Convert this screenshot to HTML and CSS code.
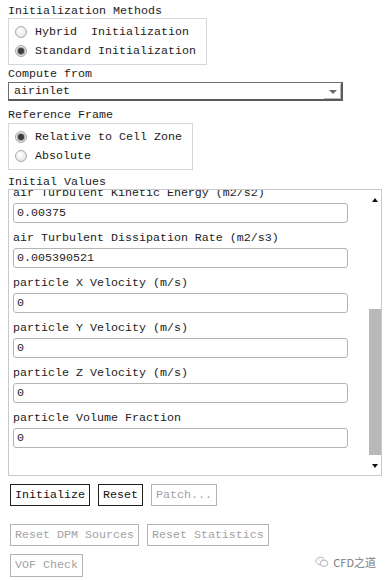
FILE: index.html
```html
<!doctype html>
<html>
<head>
<meta charset="utf-8">
<title>Solution Initialization</title>
<link rel="stylesheet" href="styles.css">
</head>
<body>
 <div class="page">
	<div class="caption">Initialization Methods</div>
	<div class="group">
		<div class="option"><span class="radio"></span><span class="opt-text">Hybrid  Initialization</span></div>
		<div class="option"><span class="radio on"></span><span class="opt-text">Standard Initialization</span></div>
	</div>

	<div class="caption cap-compute">Compute from</div>
	<div class="combo">
		<span class="combo-val">airinlet</span>
		<span class="combo-btn"><i></i></span>
	</div>

	<div class="caption cap-frame">Reference Frame</div>
	<div class="group">
		<div class="option"><span class="radio on"></span><span class="opt-text">Relative to Cell Zone</span></div>
		<div class="option"><span class="radio"></span><span class="opt-text">Absolute</span></div>
	</div>

	<div class="caption cap-values">Initial Values</div>
	<div class="panel">
		<div class="fields">
			<div class="fields-inner">
				<div class="field-label">air Turbulent Kinetic Energy (m2/s2)</div>
				<div class="field-input">0.00375</div>
				<div class="field-label">air Turbulent Dissipation Rate (m2/s3)</div>
				<div class="field-input">0.005390521</div>
				<div class="field-label">particle X Velocity (m/s)</div>
				<div class="field-input">0</div>
				<div class="field-label">particle Y Velocity (m/s)</div>
				<div class="field-input">0</div>
				<div class="field-label">particle Z Velocity (m/s)</div>
				<div class="field-input">0</div>
				<div class="field-label">particle Volume Fraction</div>
				<div class="field-input">0</div>
			</div>
		</div>
		<div class="scrollbar">
			<div class="sb-up"><i></i></div>
			<div class="sb-track"><div class="sb-thumb"></div></div>
			<div class="sb-down"><i></i></div>
		</div>
	</div>

	<div class="btn-row row-1">
		<button class="btn">Initialize</button>
		<button class="btn">Reset</button>
		<button class="btn off">Patch...</button>
	</div>
	<div class="btn-row row-2">
		<button class="btn off">Reset DPM Sources</button>
		<button class="btn off">Reset Statistics</button>
	</div>
	<div class="btn-row row-3">
		<button class="btn off tall">VOF Check</button>
	</div>
 </div>

 <div class="mark">
	<svg width="14" height="12" viewBox="0 0 14 12">
		<ellipse cx="5.5" cy="5" rx="4.6" ry="3.8" fill="none" stroke="#b5b5b5" stroke-width="1"/>
		<ellipse cx="9" cy="7.3" rx="3.8" ry="3.1" fill="#fff" stroke="#b5b5b5" stroke-width="1"/>
		<circle cx="4" cy="3.8" r="0.6" fill="#b5b5b5"/>
		<circle cx="7" cy="3.8" r="0.6" fill="#b5b5b5"/>
	</svg>
	<span>CFD之道</span>
 </div>
</body>
</html>
```

FILE: styles.css
```css
	html,body,div,span,button{ margin: 0; padding: 0}
	body{ background: #fff; color: #1c1c1c; font-family: "Liberation Mono", "DejaVu Sans Mono", monospace; font-size: 11.67px; position: relative; height: 580px; overflow: hidden;}
	.page{ padding: 4px 0 0 8px; width: 374px;}

	.caption{ line-height: 14px; height: 14px; white-space: pre;}
	.cap-compute{ line-height: 16px; height: 16px; margin-top: 1px;}
	.cap-frame{ line-height: 16px; height: 16px; margin-top: 6px;}
	.cap-values{ margin-top: 5px;}

	.group{ width: fit-content; border: 1px solid #d3d7de; padding: 3px 10px 4px 6px;}
	.option{ display: flex; align-items: center; height: 19px; gap: 8px;}
	.opt-text{ white-space: pre;}
	.radio{ width: 12px; height: 12px; box-sizing: border-box; border: 1px solid #a9a9a9; border-radius: 50%; background: radial-gradient(circle at 40% 35%, #fff 0, #f1f1f1 45%, #dcdcdc 100%); position: relative;}
	.radio.on::after{ content: ""; position: absolute; left: 2px; top: 2px; width: 6px; height: 6px; border-radius: 50%; background: #3c3c3c; box-shadow: 0 0 1px 1px #9a9a9a;}

	.combo{ width: 335px; height: 19px; box-sizing: border-box; border: 1px solid #6e6e6e; border-right: 2px solid #5a5a5a; border-bottom: 2px solid #5a5a5a; display: flex; align-items: center; justify-content: space-between;}
	.combo-val{ padding-left: 5px;}
	.combo-btn{ width: 17px; height: 15px; box-sizing: border-box; border-right: 1px solid #b9b9b9; border-bottom: 1px solid #b9b9b9; position: relative;}
	.combo-btn i{ position: absolute; left: 5px; top: 6px; width: 0; height: 0; border-left: 4px solid transparent; border-right: 4px solid transparent; border-top: 4px solid #6a6a6a;}

	.panel{ display: flex; width: 374px; height: 287px; box-sizing: border-box; border: 1px solid #c9c9c9;}
	.fields{ flex: 1; overflow: hidden; padding-left: 4px;}
	.fields-inner{ margin-top: -7px;}
	.field-label{ line-height: 20px; height: 20px; white-space: pre;}
	.field-input{ width: 335px; height: 20px; box-sizing: border-box; border: 1px solid #b4b4b4; border-radius: 3px; padding-left: 3px; line-height: 18px; margin-bottom: 5px; color: #222;}

	.scrollbar{ width: 12px; display: flex; flex-direction: column;}
	.sb-up,.sb-down{ position: relative;}
	.sb-up{ height: 20px;}
	.sb-down{ height: 20px;}
	.sb-up i,.sb-down i{ position: absolute; left: 3px; width: 0; height: 0; border-left: 3.5px solid transparent; border-right: 3.5px solid transparent;}
	.sb-up i{ top: 8px; border-bottom: 4px solid #111;}
	.sb-down i{ top: 9px; border-top: 4px solid #111;}
	.sb-track{ flex: 1; display: flex; flex-direction: column; justify-content: flex-end;}
	.sb-thumb{ height: 146px; background: #b9b9b9;}

	.btn-row{ display: flex; gap: 8px; margin-left: 2px;}
	.row-1{ margin-top: 8px;}
	.row-2{ margin-top: 18px;}
	.row-3{ margin-top: 8px;}
	.btn{ font: inherit; height: 22px; line-height: 20px; padding: 0 4px; border: 1px solid #1e1e1e; background: #fff; color: #111; white-space: pre; cursor: pointer;}
	.btn.off{ color: #a2a2a2; border-color: #b3b3b3; cursor: default;}
	.btn.tall{ height: 23px; line-height: 21px;}

	.mark{ position: absolute; right: 11px; top: 555px; display: flex; align-items: center; gap: 4px; color: #7a7a7a; font-family: "Noto Sans CJK SC", "Noto Sans", sans-serif; font-size: 11px; line-height: 14px;}
```
